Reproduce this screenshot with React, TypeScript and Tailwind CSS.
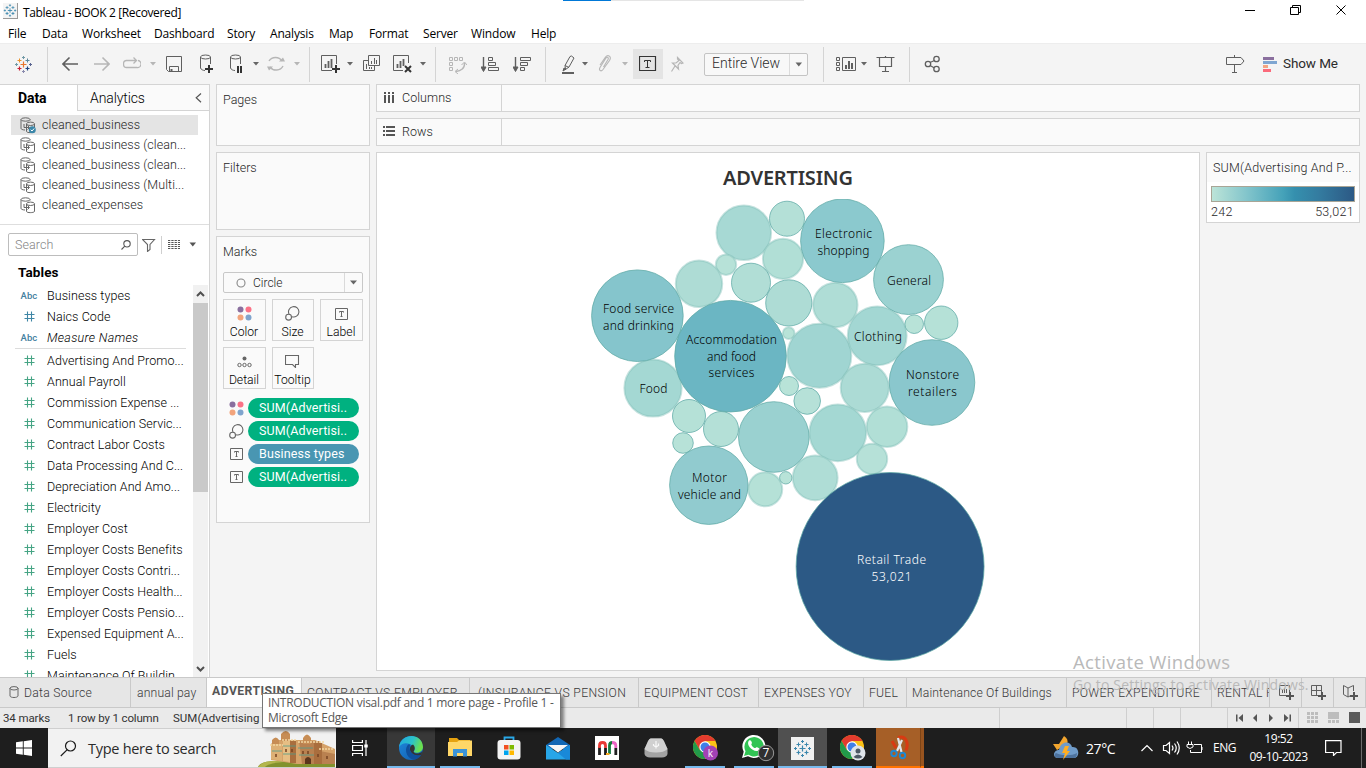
import React from "react";

const UI = "font-['Roboto','Noto_Sans',sans-serif]";
const SEG = "font-['Open_Sans','Noto_Sans',sans-serif]";

/* An icon drawn on the window's own pixel grid: v is "x y width height". */
function Ico({ v, c = "#5f5f5f", className = "", children }: { v: string; c?: string; className?: string; children: React.ReactNode }) {
  const [, , w, h] = v.split(" ");
  return (
    <svg width={w} height={h} viewBox={v} fill="none" stroke={c} strokeWidth="1" className={`block shrink-0 ${className}`}>
      {children}
    </svg>
  );
}

function Caret({ c = "#666666", className = "" }: { c?: string; className?: string }) {
  return (
    <svg width="6" height="4" viewBox="0 0 6 4" className={`block shrink-0 ${className}`}>
      <path d="M0 0H6L3 3.5Z" fill={c} />
    </svg>
  );
}

function Plus({ x, y, r, c, w = 1 }: { x: number; y: number; r: number; c: string; w?: number }) {
  return <path d={`M${x - r} ${y}H${x + r}M${x} ${y - r}V${y + r}`} stroke={c} strokeWidth={w} />;
}

function TableauMark({ mono = false }: { mono?: boolean }) {
  const k = (c: string) => (mono ? "#3b87ad" : c);
  return (
    <>
      <Plus x={8.5} y={8.5} r={3} c={k("#e8762d")} w={1.2} />
      <Plus x={4.5} y={4.5} r={2} c={k("#eb9129")} />
      <Plus x={12.5} y={4.5} r={2} c={k("#5b879b")} />
      <Plus x={4.5} y={12.5} r={2} c={k("#c72035")} w={1.2} />
      <Plus x={12.5} y={12.5} r={2} c={k("#1f447e")} w={1.2} />
      <Plus x={8.5} y={1.5} r={1.5} c={k("#7199a6")} />
      <Plus x={8.5} y={15.5} r={1.5} c={k("#8a8aad")} />
      <Plus x={1.5} y={8.5} r={1.5} c={k("#7199a6")} />
      <Plus x={15.5} y={8.5} r={1.5} c={k("#5b6591")} />
    </>
  );
}

function Sep({ className = "" }: { className?: string }) {
  return <div className={`h-[35px] w-px shrink-0 bg-[#d4d4d4] ${className}`} />;
}

function TitleBar() {
  return (
    <div className="flex h-[23px] shrink-0 items-start bg-white">
      <div className="ml-[3px] mt-[3px] h-4 w-[15px] border-b border-r border-[#9a9a9a] bg-[#f4f4f4]">
        <svg width="14" height="15" viewBox="-1 -1 19 19" fill="none">
          <TableauMark mono />
        </svg>
      </div>
      <div className={`${SEG} ml-[5px] mt-[3px] w-[540px] text-[12px] leading-[19px] tracking-[-0.36px] text-black`}>Tableau - BOOK 2 [Recovered]</div>
      <div className="h-px w-12 bg-[#0078d7]" />
      <div className="h-px w-[193px] bg-[#e5e5e5]" />
      <Ico v="1240 0 120 20" c="#000" className="ml-auto mr-[6px]">
        <path d="M1245 10.5H1255M1290.5 7.5H1298.5V14.500H1290.5ZM1292.500 7.500V5.500H1300.500V12.500H1298.500M1336.500 5.500L1345.500 14.500M1345.500 5.500L1336.500 14.500" />
      </Ico>
    </div>
  );
}

function MenuBar() {
  const items: [string, string][] = [
    ["File", "w-[34px]"], ["Data", "w-10"], ["Worksheet", "w-[72px]"], ["Dashboard", "w-[73px]"], ["Story", "w-[43px]"],
    ["Analysis", "w-[59px]"], ["Map", "w-10"], ["Format", "w-[54px]"], ["Server", "w-12"], ["Window", "w-[60px]"], ["Help", "w-10"],
  ];
  return (
    <div className={`${SEG} flex h-5 shrink-0 items-center bg-white pl-2 pt-[2px] text-[12px] leading-[18px] tracking-[-0.17px] text-black`}>
      {items.map(([t, w]) => (
        <div key={t} className={w}>{t}</div>
      ))}
    </div>
  );
}

function Toolbar() {
  const off = "#b6b6b6";
  return (
    <div className="flex h-[41px] shrink-0 items-center border-t border-[#ededed] bg-[#f4f4f4]">
      <Ico v="0 0 17 17" className="ml-[15px]"><TableauMark /></Ico>
      <Sep className="ml-[15px]" />
      <Ico v="62 55 16 18" className="ml-[14px]"><path d="M69.500 57.500L63 64L69.500 70.500M63 64H78" strokeWidth="1.600" /></Ico>
      <Ico v="94 55 16 18" c={off} className="ml-4"><path d="M102.500 57.500L109 64L102.500 70.500M109 64H94" strokeWidth="1.600" /></Ico>
      <Ico v="123 55 18 18" c={off} className="ml-[13px]"><path d="M137 67.500H126.500A3 3.500 0 0 1 126.500 60.500H136M133.500 57.500L136.500 60.500L133.500 63.500M138 60.500A3.500 3.500 0 0 1 137 67.500" strokeWidth="1.300" /></Ico>
      <Caret c={off} className="ml-[9px]" />
      <Ico v="166 55 17 18" className="ml-[10px]">
        <path d="M166.500 56.500H181.500V71.500H168.500L166.500 69.500ZM169.500 71V66.500H178.500V71" />
        <path d="M171.500 69V72" strokeWidth="2" />
      </Ico>
      <Ico v="198 54 16 22" className="ml-[15px]">
        <path d="M200.500 58V69C201 70.500 203 71.500 205 71.500M210.500 58V65" />
        <ellipse cx="205.500" cy="58" rx="5" ry="2" />
        <Plus x={209} y={70} r={4} c="#333" w={2} />
      </Ico>
      <Ico v="230 54 14 22" className="ml-4">
        <path d="M230.500 58V69C231 70.500 233 71.500 235 71.500M240.500 58V65" />
        <ellipse cx="235.500" cy="58" rx="5" ry="2" />
        <path d="M238 67V74M241 67V74" stroke="#333" strokeWidth="2" />
      </Ico>
      <Caret className="ml-[9px]" />
      <Ico v="267 55 18 18" c={off} className="ml-2">
        <path d="M269 61A7.500 7 0 0 1 282 61M283 66A7.500 7 0 0 1 270 67" strokeWidth="1.400" />
        <path d="M279 61.500H285L283 57.500ZM267 66.500H273L269 70.500Z" fill={off} stroke="none" />
      </Ico>
      <Caret c={off} className="ml-[9px]" />
      <Sep className="ml-[9px]" />
      <Ico v="321 55 20 20" className="ml-[11px]">
        <path d="M332 71.500H321.500V56.500H336.500V65" />
        <path d="M325.500 65V69M328.500 62V69M331.500 60V69" strokeWidth="1.800" />
        <Plus x={336} y={70} r={4} c="#333" w={2} />
      </Ico>
      <Caret className="ml-[6px]" />
      <Ico v="363 54 18 20" className="ml-[10px]">
        <path d="M368 60.500H363.500V70.500H374.500V66M368.500 55.500H379.500V65.500H368.500Z" />
        <path d="M366.500 64V69M369.500 67V69M371.500 67V69M371.500 61V64M374.500 58V64M376.500 60V64" />
      </Ico>
      <Ico v="393 55 19 20" className="ml-3">
        <path d="M403 71.500H393.500V56.500H408.500V64" />
        <path d="M397.500 65V69M400.500 62V69M403.500 60V67" strokeWidth="1.800" />
        <path d="M405 67L411 73M411 67L405 73" stroke="#333" strokeWidth="2" />
      </Ico>
      <Caret className="ml-2" />
      <Sep className="ml-[9px]" />
      <Ico v="449 55 18 19" c={off} className="ml-[13px]">
        <path d="M449.500 57.500H452.500V60.500H449.500ZM454.500 57.500H457.500V60.500H454.500ZM459.500 57.500H462.500V60.500H459.500ZM449.500 62.500H452.500V65.500H449.500ZM449.500 67.500H452.500V70.500H449.500Z" />
        <path d="M464.500 63C465 68 461 71 456 71.500" strokeWidth="1.400" />
        <path d="M461.500 65L464.500 62L467 65M458 69L455 71.500L458 74" />
      </Ico>
      <Ico v="481 55 18 18" className="ml-[14px]">
        <path d="M483.500 57V70" strokeWidth="1.400" />
        <path d="M481 67H486L483.500 71.500Z" fill="#5f5f5f" />
        <path d="M488.500 57.500H492.500V60.500H488.500ZM488.500 62.500H495.500V65.500H488.500ZM488.500 67.500H498.500V70.500H488.500Z" />
      </Ico>
      <Ico v="513 55 18 18" className="ml-[14px]">
        <path d="M515.500 57V70" strokeWidth="1.400" />
        <path d="M513 67H518L515.500 71.500Z" fill="#5f5f5f" />
        <path d="M520.500 57.500H530.500V60.500H520.500ZM520.500 62.500H527.500V65.500H520.500ZM520.500 67.500H524.500V70.500H520.500Z" />
      </Ico>
      <Sep className="ml-[14px]" />
      <Ico v="561 54 14 20" className="ml-[15px]">
        <path d="M571.500 56L574 58L569 67L565.500 69.500L565 65.500L570 56.500ZM565 65.500L569 67.500" />
        <path d="M562 73H574" strokeWidth="2" />
        <path d="M564 68L563 71L566 69Z" fill="#5f5f5f" />
      </Ico>
      <Caret className="ml-[7px]" />
      <Ico v="598 54 14 20" c={off} className="ml-[10px]">
        <path d="M603.500 67L608 59.500C609 57.500 607 56.500 606 58L600 67.500C598.500 70.500 601 72 603 69.500L609.500 60.500C612 56.500 608 54 605.500 57L600 65" strokeWidth="1.100" />
      </Ico>
      <Caret c={off} className="ml-[10px]" />
      <div className="ml-[5px] flex h-[30px] w-[30px] items-center justify-center bg-[#e4e4e4]">
        <Ico v="639 56 18 16" c="#333">
          <path d="M639.500 56.500H655.500V70.500H639.500Z" strokeWidth="1.200" />
          <path d="M644.500 62V60.500H650.500V62M647.500 60.500V67.500M645.500 67.500H649.500" />
        </Ico>
      </div>
      <Ico v="671 55 13 17" c={off} className="ml-[8px]">
        <path d="M677.500 56.500L683 62L681.500 62.500L680 61.500L678 64.500L678.500 68L672.500 62L676 62L679 59.500L677.500 58ZM675 65L671.500 70.500" strokeWidth="1.200" />
      </Ico>
      <div className={`${UI} ml-[20px] flex h-[23px] w-[104px] items-center rounded-[2px] border border-[#c4c4c4] bg-[#f8f8f8] text-[14px] font-light text-[#2b2b2b]`}>
        <span className="ml-[7px] w-[77px] whitespace-nowrap pb-px">Entire View</span>
        <span className="h-full w-px bg-[#dcdcdc]" />
        <svg width="8" height="5" viewBox="0 0 8 5" className="ml-[5px]"><path d="M0.500 0.500H7L3.750 4.500Z" fill="#666" /></svg>
      </div>
      <Sep className="ml-[15px]" />
      <Ico v="836 56 20 16" className="ml-3">
        <path d="M836.500 57.500H839.500V60.500H836.500ZM836.500 62.500H839.500V65.500H836.500ZM836.500 67.500H839.500V70.500H836.500ZM842.500 57.500H855.500V70.500H842.500Z" />
        <path d="M846 65V69M849 61V69M852 63V69" strokeWidth="2" />
      </Ico>
      <Caret className="ml-[5px]" />
      <Ico v="876 55 19 18" className="ml-[9px]"><path d="M876.500 57.500H894.500M879.500 57.500V66.500H891.500V57.500M885.500 56V57M885.500 66.500V71M882 71.500H889" strokeWidth="1.200" /></Ico>
      <Sep className="ml-[14px]" />
      <Ico v="924 55 16 18" className="ml-[14px]">
        <circle cx="928" cy="64" r="2.700" strokeWidth="1.300" /><circle cx="936.500" cy="59" r="2.700" strokeWidth="1.300" /><circle cx="936.500" cy="69" r="2.700" strokeWidth="1.300" />
        <path d="M930 62.500L934.500 60.500M930 65.500L934.500 68" strokeWidth="1.200" />
      </Ico>
      <Ico v="1225 54 20 20" className="ml-auto">
        <path d="M1226.500 57.500H1241L1244 61L1241 64.500H1226.500ZM1234.500 55V57M1234.500 65V72M1232 72.500H1237" />
      </Ico>
      <Ico v="1263 56 14 15" className="ml-[18px]">
        <path d="M1263 57.500H1274" stroke="#8a6f9e" strokeWidth="3" />
        <path d="M1263 61.500H1277" stroke="#7fa6d1" strokeWidth="3" />
        <path d="M1263 65.500H1268" stroke="#f4a582" strokeWidth="3" />
        <path d="M1263 69.500H1271" stroke="#fb6a7b" strokeWidth="3" />
      </Ico>
      <div className={`${UI} ml-[6px] w-[83px] pb-px text-[13.500px] tracking-[-0.1px] text-[#2b2b2b]`}>Show Me</div>
    </div>
  );
}

function DbIcon({ primary = false }: { primary?: boolean }) {
  return (
    <svg width="16" height="17" viewBox="0 0 16 17" fill="none" stroke="#666" className="block shrink-0">
      <path d="M5 13C2.500 13 1 12 1 11.500V2.500M10 2.500V3.500" />
      <ellipse cx="5.500" cy="2.500" rx="4.500" ry="1.700" />
      <path d="M6.500 7V14.500C7 16 13.500 16 14.500 14.500V7" />
      <ellipse cx="10.500" cy="6.800" rx="4" ry="1.700" />
      <path d="M4 7V10.500H9M7.500 8.500L9.500 10.500L7.500 12.500" />
      {primary && (
        <>
          <circle cx="12.300" cy="12.700" r="3.500" fill="#3b87a9" stroke="none" />
          <path d="M10.700 12.700L12 14L14.200 11.500" stroke="#fff" />
        </>
      )}
    </svg>
  );
}

function FieldRow({ kind, name }: { kind: "abc" | "dim" | "num"; name: string }) {
  return (
    <div className="flex h-[21px] shrink-0 items-center">
      <div className="flex w-[47px] shrink-0 justify-center pl-[11px]">
        {kind === "abc" ? (
          <span className={`${UI} pt-px text-[9.500px] font-medium leading-3 text-[#45819f]`}>Abc</span>
        ) : (
          <svg width="11" height="11" viewBox="0 0 11 11" fill="none" stroke={kind === "dim" ? "#3f86a5" : "#45a484"} strokeWidth="1.100">
            <path d="M0.500 3.500H10.500M0.500 7.500H10.500M3.500 0.500V10.500M7.500 0.500V10.500" />
          </svg>
        )}
      </div>
      <div className={`whitespace-nowrap pt-px ${name === "Measure Names" ? "italic tracking-[0.3px]" : ""}`}>{name}</div>
    </div>
  );
}

function DataPane() {
  const sources = ["cleaned_business", "cleaned_business (clean...", "cleaned_business (clean...", "cleaned_business (Multi...", "cleaned_expenses"];
  const measures = [
    "Advertising And Promo...", "Annual Payroll", "Commission Expense ...", "Communication Servic...", "Contract Labor Costs",
    "Data Processing And C...", "Depreciation And Amo...", "Electricity", "Employer Cost", "Employer Costs Benefits", "Employer Costs Contri...",
    "Employer Costs Health...", "Employer Costs Pensio...", "Expensed Equipment A...", "Fuels", "Maintenance Of Buildin...",
  ];
  return (
    <div className={`${UI} flex w-[210px] shrink-0 flex-col overflow-hidden border-r border-t border-[#d4d4d4] bg-white text-[12.5px] font-light tracking-[0.07px] text-black`}>
      <div className="flex h-[26px] shrink-0 text-[14px] leading-[26px]">
        <div className="w-[77px] pl-[18px] font-bold tracking-[-0.1px] text-black">Data</div>
        <div className="flex flex-1 items-center border-b border-l border-[#d4d4d4] bg-[#fafafa] pl-3">
          <span className="flex-1 tracking-[-0.1px]">Analytics</span>
          <svg width="7" height="10" viewBox="0 0 7 10" fill="none" stroke="#555" strokeWidth="1.200" className="mr-[7px]"><path d="M6 0.500L1.200 4.800L6 9.200" /></svg>
        </div>
      </div>
      <div className="mt-1 flex h-[110px] shrink-0 flex-col border-b border-[#dedede] pl-[11px] pr-[11px] text-[#262626]">
        {sources.map((s, i) => (
          <div key={i} className={`flex h-5 shrink-0 items-center pl-[9px] ${i === 0 ? "bg-[#e4e4e4]" : ""}`}>
            <DbIcon primary={i === 0} />
            <span className="ml-[6px] whitespace-nowrap">{s}</span>
          </div>
        ))}
      </div>
      <div className="mt-2 flex h-[23px] shrink-0 items-center pl-2">
        <div className="flex h-[23px] w-[130px] items-center rounded-[2px] border border-[#bdbdbd] pl-[6px] text-[#858585]">
          <span className="flex-1 pt-px">Search</span>
          <svg width="10" height="10" viewBox="0 0 10 10" fill="none" stroke="#555" strokeWidth="1.100" className="mr-[6px]"><circle cx="6" cy="3.800" r="3.200" /><path d="M3.800 6.200L0.500 9.500" /></svg>
        </div>
        <Ico v="142 237 14 14" className="ml-1" c="#666"><path d="M142.500 238.500H154.500L150 243.500V248.500L147.500 250.500V243.500Z" strokeWidth="1.100" /></Ico>
        <div className="ml-[5px] h-[18px] w-px bg-[#cfcfcf]" />
        <svg width="12" height="9" viewBox="0 0 12 9" stroke="#555" strokeDasharray="2.300 1" className="ml-[6px] mb-px"><path d="M0 0.500H12M0 2.500H12M0 4.500H12M0 6.500H12M0 8.500H12" /></svg>
        <svg width="8" height="5" viewBox="0 0 8 5" className="ml-[9px]"><path d="M0.500 0.500H7L3.750 4.500Z" fill="#555" /></svg>
      </div>
      <div className="h-[29px] shrink-0 pl-[18px] text-[13.5px] font-bold leading-[32px] tracking-[0.1px] text-black">Tables</div>
      <div className="flex min-h-0 flex-1">
        <div className="flex w-[193px] flex-col overflow-hidden">
          <FieldRow kind="abc" name="Business types" />
          <FieldRow kind="dim" name="Naics Code" />
          <FieldRow kind="abc" name="Measure Names" />
          <div className="ml-[15px] mr-[7px] h-px shrink-0 bg-[#dcdcdc]" />
          <div className="h-px shrink-0" />
          {measures.map((m) => (
            <FieldRow key={m} kind="num" name={m} />
          ))}
        </div>
        <div className="flex w-[15px] flex-col items-center bg-[#f1f1f1]">
          <svg width="9" height="6" viewBox="0 0 9 6" fill="none" stroke="#505050" strokeWidth="2" className="mb-[6px] mt-[6px] shrink-0"><path d="M1 5L4.500 1.500L8 5" /></svg>
          <div className="h-[189px] w-full shrink-0 bg-[#c9c9c9]" />
          <svg width="9" height="6" viewBox="0 0 9 6" fill="none" stroke="#505050" strokeWidth="2" className="mb-[5px] mt-auto shrink-0"><path d="M1 1L4.500 4.500L8 1" /></svg>
        </div>
      </div>
    </div>
  );
}

const Dots = () => (
  <svg width="15" height="15" viewBox="0 0 15 15"><circle cx="3.500" cy="3.500" r="3" fill="#8a6f9e" /><circle cx="11.500" cy="3.500" r="3" fill="#fb7287" /><circle cx="3.500" cy="11.500" r="3" fill="#f2a47c" /><circle cx="11.500" cy="11.500" r="3" fill="#7fa4cd" /></svg>
);
const SizeIcon = () => (
  <svg width="15" height="15" viewBox="0 0 15 15" fill="none" stroke="#666" strokeWidth="1.100"><path d="M4 8A5.200 5.200 0 1 1 7 10.700" /><circle cx="3.600" cy="11.200" r="2.900" /></svg>
);
const TIcon = () => (
  <svg width="13" height="12" viewBox="0 0 13 12" fill="none" stroke="#666"><path d="M0.500 0.500H12.500V11.500H0.500ZM4.500 4.500V3.500H8.500V4.500M6.500 3.500V8.500M5.500 8.500H7.500" /></svg>
);
const DetailIcon = () => (
  <svg width="15" height="12" viewBox="0 0 15 12" fill="none" stroke="#666"><circle cx="7.500" cy="2.500" r="2" fill="#666" stroke="none" /><circle cx="2.500" cy="9" r="1.700" /><circle cx="7.500" cy="9" r="1.700" /><circle cx="12.500" cy="9" r="1.700" /></svg>
);
const TipIcon = () => (
  <svg width="15" height="13" viewBox="0 0 15 13" fill="none" stroke="#666" strokeWidth="1.100"><path d="M0.500 0.500H13.500V9.500H10.500V12.500L7.500 9.500H0.500Z" /></svg>
);

function Cards() {
  const pills: [React.ReactNode, string, string][] = [
    [<Dots />, "SUM(Advertisi..", "bg-[#00b180]"],
    [<SizeIcon />, "SUM(Advertisi..", "bg-[#00b180]"],
    [<TIcon />, "Business types", "bg-[#4996b2]"],
    [<TIcon />, "SUM(Advertisi..", "bg-[#00b180]"],
  ];
  const buttons: [React.ReactNode, string, string][] = [
    [<Dots />, "Color", "w-[43px]"], [<SizeIcon />, "Size", "w-[42px]"], [<TIcon />, "Label", "w-[43px]"],
    [<DetailIcon />, "Detail", "w-[43px]"], [<TipIcon />, "Tooltip", "w-[42px]"],
  ];
  const card = "border border-[#d4d4d4] bg-[#fafafa] pl-[6px]";
  return (
    <div className={`${UI} ml-[6px] flex w-[154px] shrink-0 flex-col gap-[6px] text-[12.5px] font-light text-[#262626]`}>
      <div className={`${card} h-[62px] leading-[30px]`}>Pages</div>
      <div className={`${card} h-[78px] leading-[30px]`}>Filters</div>
      <div className={`${card} h-[287px]`}>
        <div className="h-[35px] leading-[30px]">Marks</div>
        <div className="flex h-[21px] w-[140px] items-center rounded-[2px] border border-[#c8c8c8] text-[12px]">
          <svg width="10" height="10" viewBox="0 0 10 10" className="ml-3"><circle cx="5" cy="5" r="4" fill="none" stroke="#888" strokeWidth="1.100" /></svg>
          <span className="ml-[7px] flex-1 pt-px">Circle</span>
          <span className="h-full w-px bg-[#dadada]" />
          <svg width="7" height="5" viewBox="0 0 7 5" className="ml-[5px] mr-[5px]"><path d="M0 0.500H7L3.500 4.500Z" fill="#666" /></svg>
        </div>
        <div className="mt-[6px] flex flex-wrap gap-x-[6px] gap-y-[6px]">
          {buttons.map(([ic, t, w]) => (
            <div key={t} className={`${w} flex h-[42px] flex-col items-center whitespace-nowrap border border-[#d4d4d4] pr-px text-[12.2px] leading-[15px] text-black`}>
              <div className="flex h-[25px] items-center pt-[2px]">{ic}</div>
              {t}
            </div>
          ))}
        </div>
        <div className="mt-[9px] flex flex-col gap-[3px]">
          {pills.map(([ic, t, bg], i) => (
            <div key={i} className="flex h-5 items-center">
              <div className="flex w-[28px] justify-center pr-[2px]"><div className="flex w-[15px] shrink-0 justify-center">{ic}</div></div>
              <div className={`${bg} -ml-[3px] h-5 w-[111px] rounded-full pl-[11px] text-[12.5px] font-normal leading-5 tracking-[0.12px] text-white`}>{t}</div>
            </div>
          ))}
        </div>
      </div>
    </div>
  );
}

const bubbles: [number, number, number, string][] = [
  [743.8, 232.8, 27.7, "#a7d9d4"], [787, 218.7, 18, "#b4e0d7"], [783, 258.8, 20.5, "#b1dfd6"], [726, 264.7, 10.6, "#b7e2d8"],
  [751, 282.7, 20, "#b1ded6"], [699, 283.8, 23.6, "#aedcd5"], [788.8, 302.9, 23.6, "#aedcd5"], [835.3, 305, 22.6, "#afddd6"],
  [788.7, 333.2, 6.3, "#b8e3d8"], [819.3, 355.8, 32.4, "#a0d5d2"], [877.2, 335.8, 29.8, "#a3d7d3"], [914.2, 324.2, 9.8, "#b8e3d8"],
  [941.2, 322.7, 17.2, "#b5e1d7"], [789, 386, 10, "#b8e3d8"], [807.2, 401, 13.8, "#b6e1d8"], [864.8, 387.8, 24.5, "#acdbd5"],
  [653, 388, 29, "#a4d8d3"], [689, 416, 17, "#b5e1d7"], [721, 429, 18, "#b4e0d7"], [837.8, 432.8, 28.8, "#a4d8d3"],
  [887, 426.7, 20.7, "#b1dfd6"], [683, 443, 10.8, "#b7e2d8"], [765.2, 489.3, 17.4, "#b5e1d7"], [785.8, 477.8, 6.7, "#b8e3d8"],
  [815.2, 477.8, 22.8, "#afddd6"], [872, 458.9, 15.6, "#b6e1d8"], [773.8, 437, 35.8, "#9ad1d0"], [708.8, 485.2, 39.7, "#91cbcf"],
  [637.4, 315.7, 46.3, "#85c5cc"], [842.4, 240.8, 42.3, "#8bc9ce"], [908.5, 279.6, 35.4, "#9bd2d1"], [932, 382.5, 43.3, "#8ac7cd"],
  [730.5, 356.2, 56.3, "#6bb6c3"], [890.1, 566.5, 94.5, "#2c5985"],
];

const softRing = new Set([0, 2, 3, 5, 7, 8, 9, 10, 15, 16, 19, 20, 22, 24, 25]);

const labels: [string, number, number, number][] = [
  ["Electronic", 843.5, 238, 57], ["shopping", 843.5, 255, 52], ["General", 909, 285, 44], ["Clothing", 878, 341, 48],
  ["Food service", 638.5, 313, 71], ["and drinking", 638.5, 330, 71], ["Accommodation", 731.5, 344, 91], ["and food", 731.5, 361, 49],
  ["services", 731.5, 377, 46], ["Food", 653.5, 393, 28], ["Nonstore", 932.5, 379, 53], ["retailers", 932.5, 396, 49],
  ["Motor", 709.5, 482, 35], ["vehicle and", 709.5, 499, 63], ["Retail Trade", 891.5, 564, 69], ["53,021", 891.5, 581, 40],
];

function Viz() {
  return (
    <svg width="822" height="517" viewBox="377 153 822 517" className="block font-['Noto_Sans',sans-serif]">
      <clipPath id="plot"><rect x="377" y="199" width="822" height="470" /></clipPath>
      <text x="788" y="185" textAnchor="middle" textLength="130" className="fill-[#333] text-[20px] font-semibold">ADVERTISING</text>
      <g clipPath="url(#plot)">
        {bubbles.map(([x, y, r, c], i) =>
          softRing.has(i) ? (
            <circle key={i} cx={x} cy={y} r={r - 0.4} fill={c} stroke="#86c0bb" strokeOpacity="0.45" strokeWidth="2" />
          ) : (
            <circle key={i} cx={x} cy={y} r={r - 0.5} fill={c} stroke="#5fa9a5" strokeOpacity="0.75" />
          ),
        )}
      </g>
      {labels.map(([t, x, y, w]) => (
        <text key={t} x={x} y={y} textAnchor="middle" textLength={w} className={y > 540 ? "fill-white text-[12px] font-light" : "fill-black text-[12px] font-light"}>{t}</text>
      ))}
    </svg>
  );
}

function Shelf({ name }: { name: string }) {
  return (
    <div className="flex h-7 shrink-0 items-center border border-[#d4d4d4] bg-[#fafafa] text-[12.5px] font-light text-[#262626]">
      <div className="flex h-full w-[125px] items-center border-r border-[#d4d4d4] pl-[6px]">
        {name === "Columns" ? (
          <svg width="12" height="11" viewBox="0 0 12 11" className="mt-[-2px]"><path d="M2 0V2M6 0V2M10 0V2M2 3V11M6 3V11M10 3V11" stroke="#555" strokeWidth="2" /></svg>
        ) : (
          <svg width="12" height="11" viewBox="0 0 12 11" className="mt-[-2px]"><path d="M0 1H2M0 5H2M0 9H2M3 1H12M3 5H12M3 9H12" stroke="#555" strokeWidth="2" /></svg>
        )}
        <span className="ml-[7px] pt-px tracking-[0.05px]">{name}</span>
      </div>
    </div>
  );
}

function Workspace() {
  return (
    <div className={`${UI} ml-[6px] flex w-[984px] shrink-0 flex-col gap-[6px]`}>
      <Shelf name="Columns" />
      <Shelf name="Rows" />
      <div className="flex gap-[6px]">
        <div className="h-[519px] w-[824px] border border-[#d4d4d4] bg-white"><Viz /></div>
        <div className="flex h-[71px] w-[154px] flex-col border border-[#d4d4d4] bg-white text-[12.5px] font-light text-[#262626]">
          <div className="h-[29px] whitespace-nowrap bg-[#fafafa] pl-[6px] leading-[30px] tracking-[0.18px]">SUM(Advertising And P...</div>
          <div className="ml-1 mt-1 h-4 w-36 shrink-0 border border-[#a9a596] bg-[linear-gradient(90deg,#bce4d8_0%,#81c4cb_25%,#45a2b9_50%,#3590ae_58%,#347ca0_75%,#2c5985_100%)]" />
          <div className="flex justify-between pl-1 pr-[5px] leading-[20px] tracking-[0.3px]"><span>242</span><span>53,021</span></div>
        </div>
      </div>
    </div>
  );
}

function SheetTabs() {
  const tabs: [string, string][] = [
    ["CONTRACT VS EMPLOYER", "w-[168px] pl-[5px] tracking-[0.36px]"], ["(INSURANCE VS PENSION", "w-[169px] pl-[8px] tracking-[0.34px]"],
    ["EQUIPMENT COST", "w-[120px] pl-[5px] tracking-[0.25px]"], ["EXPENSES YOY", "w-[105px] pl-[5px] tracking-[0.3px]"],
    ["FUEL", "w-[43px] pl-[5px] tracking-[0.2px]"], ["Maintenance Of Buildings", "w-[160px] pl-[5px] tracking-[0.15px]"],
    ["POWER EXPENDITURE", "w-[145px] pl-[5px] tracking-[0.3px]"], ["RENTAL PAYMENT", "w-[58px] pl-[5px] tracking-[0.3px]"],
  ];
  const cell = "h-full shrink-0 overflow-hidden whitespace-nowrap border-r border-[#c9c9c9]";
  return (
    <div className={`${UI} flex h-[31px] shrink-0 border-b border-t border-[#c9c9c9] bg-[#e6e6e6] text-[12.2px] font-light leading-[30px] text-[#383838]`}>
      <div className={`${cell} flex w-[131px] items-start pl-[9px] tracking-[0.25px]`}>
        <svg width="10" height="12" viewBox="0 0 10 12" fill="none" stroke="#666" className="mr-[5px] mt-2"><path d="M1 2V10C1.500 12 8.500 12 9 10V2" /><ellipse cx="5" cy="2.300" rx="4" ry="1.700" /></svg>
        Data Source
      </div>
      <div className={`${cell} w-[76px] pl-[6px] tracking-[0.15px]`}>annual pay</div>
      <div className={`${cell} w-[95px] bg-[#fdfdfd] pl-[5px] font-bold leading-[27px] tracking-[0.45px] text-[#555]`}>ADVERTISING</div>
      {tabs.map(([t, w]) => (
        <div key={t} className={`${cell} ${w}`}>{t}</div>
      ))}
      <div className={`${cell} flex w-8 items-center justify-center`}>
        <Ico v="1278 685 16 17"><path d="M1288 696.500H1279.500V686.500H1289.500V693M1282.500 691V694M1284.500 689V694M1286.500 690V694" /><Plus x={1290} y={697} r={4} c="#555" w={2} /></Ico>
      </div>
      <div className={`${cell} flex w-8 items-center justify-center`}>
        <Ico v="1310 685 16 17"><path d="M1320 696.500H1311.500V686.500H1321.500V693M1316.500 687V696M1312 691.500H1321" /><Plus x={1322} y={697} r={4} c="#555" w={2} /></Ico>
      </div>
      <div className={`${cell} flex w-8 items-center justify-center`}>
        <Ico v="1342 685 16 17"><path d="M1348 689L1343.500 686.500V695.500L1348 698V689L1353.500 686.500V692M1348 698L1350 697" /><Plus x={1354} y={697} r={4} c="#555" w={2} /></Ico>
      </div>
    </div>
  );
}

function StatusBar() {
  const cell = "h-full shrink-0 border-r border-[#cfcfcf]";
  return (
    <div className={`${UI} flex h-5 shrink-0 bg-[#eaeaea] text-[11.5px] leading-5 text-[#333]`}>
      <div className="w-[64px] pl-[3px] tracking-[-0.1px]">34 marks</div>
      <div className="w-[109px] pl-[4px] tracking-[-0.15px]">1 row by 1 column</div>
      <div className={`${cell} w-[827px] tracking-[0.02px]`}>SUM(Advertising</div>
      <div className={`${cell} w-[127px]`} />
      <div className={`${cell} w-[27px]`} />
      <div className={`${cell} w-[27px]`} />
      <div className={`${cell} w-[47px]`} />
      <div className={`${cell} flex w-[71px] items-center justify-center pl-[2px]`}>
        <svg width="56" height="8" viewBox="0 0 56 8" fill="#555"><path d="M0 0.500H1.500V7.500H0ZM7 0V8L2.500 4ZM21 0V8L17 4ZM33 0V8L37 4ZM48 0V8L52.500 4ZM53.500 0.500H55V7.500H53.500Z" /></svg>
      </div>
      <svg width="67" height="20" viewBox="1299 708 67 20" className="block">
        <path d="M1307 713.500H1318M1307 717.500H1318M1307 721.500H1318" stroke="#bdbdbd" strokeWidth="3" strokeDasharray="3 1" />
        <path d="M1328 712H1339V719H1328Z" fill="#bdbdbd" />
        <path d="M1328 721.500H1339" stroke="#bdbdbd" strokeWidth="3" strokeDasharray="3 1" />
        <path d="M1349 712H1360V723H1349Z" fill="#5a5a5a" />
      </svg>
    </div>
  );
}

function Fort() {
  return (
    <svg width="77" height="36" viewBox="259 732 77 36" className="block self-end">
      <path d="M259 768C261 762 275 760 296 764C315 767 328 760 336 763V768Z" fill="#82922d" />
      <path d="M272 745L276 741H316L336 750V765H298L272 761Z" fill="#d5a269" />
      <path d="M300 742H321V752L336 755V765H303Z" fill="#b98150" />
      <path d="M282 735Q287 729 291 735V742H282ZM304 739Q308 732 312 739V745H304ZM273 741Q277 736 280 741V746H273Z" fill="#c78d55" />
      <path d="M284 742H297V764L284 762Z" fill="#e6be83" />
      <path d="M291 742H297V764H291ZM315 744H323V765H315Z" fill="#a96e3e" />
      <path d="M272 745H283V762L272 760Z" fill="#ddb075" />
      <path d="M283 741H298M271 746H284M299 743H325M320 750H335" stroke="#f3d8a3" strokeWidth="1.500" strokeDasharray="2 1" />
      <path d="M284 747H297M273 752H283M299 749H314M284 755H297M300 756H315" stroke="#4f9c8e" strokeWidth="0.800" />
      <path d="M287 750V753M293 750V753M277 755V758M304 752V755M309 752V755M319 755V758M328 757V760" stroke="#754322" strokeWidth="1.500" />
      <path d="M306 765V760Q309 756 312 760V765Z" fill="#5c351c" />
      <path d="M259 768C263 762 274 761 284 763C272 764 268 766 266 768Z" fill="#b3b64c" />
    </svg>
  );
}

const Chrome = ({ children }: { children: React.ReactNode }) => (
  <svg width="26" height="26" viewBox="0 0 26 26" className="-mr-0.5">
    <circle cx="12" cy="12" r="12" fill="#fbc116" />
    <path d="M1.600 6A12 12 0 0 1 22.400 6H12L6.800 15Z" fill="#e33b2e" />
    <path d="M1.600 6A12 12 0 0 0 12 24L17.200 15L12 12L6.800 15Z" fill="#229a4a" />
    <circle cx="12" cy="12" r="5.700" fill="#fff" /><circle cx="12" cy="12" r="4.500" fill="#3f7fe8" />
    {children}
  </svg>
);

function TaskButton({ w, bar = "", bg = "", children }: { w: string; bar?: string; bg?: string; children: React.ReactNode }) {
  return (
    <div className={`flex h-full ${w} shrink-0 flex-col items-center ${bg}`}>
      <div className="flex h-[38px] items-center pt-[2px]">{children}</div>
      <div className={`h-[2px] ${bar}`} />
    </div>
  );
}

function Taskbar() {
  return (
    <div className={`${SEG} flex h-10 shrink-0 items-center bg-[#1e1e1e] text-white`}>
      <div className="flex w-12 justify-center">
        <svg width="16" height="16" viewBox="0 0 16 16" fill="#fff"><path d="M0 2.300L6.800 1.300V7.500H0ZM7.700 1.200L16 0V7.500H7.700ZM0 8.400H6.800V14.700L0 13.700ZM7.700 8.400H16V16L7.700 14.800Z" /></svg>
      </div>
      <div className="flex h-full w-[288px] items-center border-b border-t border-[#cfcfcf] bg-[#f2f2f2] pl-3">
        <svg width="17" height="17" viewBox="0 0 17 17" fill="none" stroke="#1a1a1a" strokeWidth="1.200"><circle cx="10.500" cy="6" r="5" /><path d="M7 9.800L0.800 16" /></svg>
        <span className="ml-[11px] w-[170px] whitespace-nowrap pt-px text-[14.500px] tracking-[-0.28px] text-[#2b2b2b]">Type here to search</span>
        <Fort />
      </div>
      <div className="flex w-[51px] pl-4">
        <svg width="17" height="16" viewBox="0 0 17 16" fill="none" stroke="#fff" strokeWidth="1.200"><path d="M0.600 0V2.500H10.400V0M0.600 5.500H10.400V10.500H0.600ZM0.600 16V13.500H10.400V16M14 0V16" /><path d="M14 4.500V7.500" strokeWidth="3.500" /></svg>
      </div>
      <TaskButton w="w-12" bg="bg-[#383838]" bar="w-full bg-[#76b9ed]">
        <svg width="24" height="24" viewBox="0 0 24 24">
          <defs>
            <linearGradient id="ea" x1="0" y1="0" x2="1" y2="0.300"><stop offset="0" stopColor="#21a8e0" /><stop offset="0.600" stopColor="#2cc3c9" /><stop offset="1" stopColor="#6be04e" /></linearGradient>
            <linearGradient id="eb" x1="0" y1="0" x2="1" y2="1"><stop offset="0" stopColor="#1f8ae0" /><stop offset="1" stopColor="#1159a8" /></linearGradient>
          </defs>
          <circle cx="12" cy="12" r="12" fill="url(#eb)" />
          <path d="M0 11C2 -3 23 -4 24 11C24 16 18 18 14.500 16C16 14 16 12 14.500 10.500C10 6 3 6 0 11Z" fill="url(#ea)" />
          <path d="M14 8.500C16 10 16.500 13 14.500 15.500C15 18 20 18.500 23.500 15.500L22 19.500C18 20.500 12 19 11 14C10.600 11 12 9 14 8.500Z" fill="#333" />
          <path d="M10 8C5 11 6 22 15 23.700C19 23 21 21 22.500 18.800C15 21 9 16 11 9Z" fill="#0f4f9c" />
        </svg>
      </TaskButton>
      <TaskButton w="w-[49px]" bar="w-10 bg-[#76b9ed]">
        <svg width="24" height="20" viewBox="0 0 24 20"><path d="M1 0H9L11 2H22V6H1Z" fill="#e6a20f" /><path d="M0 4H9L11 2.500H24V18H0Z" fill="#ffd768" /><path d="M5 11H19V18.500H15V15H9V18.500H5Z" fill="#3b93d8" /></svg>
      </TaskButton>
      <TaskButton w="w-[49px]">
        <svg width="24" height="24" viewBox="0 0 24 24"><path d="M7.500 5V1.500H16.500V5" fill="none" stroke="#29a8e8" strokeWidth="1.800" /><rect x="0.500" y="4" width="23" height="19.500" rx="3" fill="#f4f4f4" /><path d="M7 9H11.500V13.500H7Z" fill="#f25022" /><path d="M12.500 9H17V13.500H12.500Z" fill="#7fba00" /><path d="M7 14.500H11.500V19H7Z" fill="#00a4ef" /><path d="M12.500 14.500H17V19H12.500Z" fill="#ffb900" /></svg>
      </TaskButton>
      <TaskButton w="w-[49px]">
        <svg width="24" height="23" viewBox="0 0 24 23"><path d="M0 8L12 0L24 8V12H0Z" fill="#1267b4" /><path d="M0 8V22.500H24V8L12 16Z" fill="#28a6e8" /><path d="M12 16L24 8V22.500H20Z" fill="#1989d8" /><path d="M2 8H22L12 15.500Z" fill="#f6f6f6" /></svg>
      </TaskButton>
      <TaskButton w="w-[49px]">
        <svg width="24" height="24" viewBox="0 0 24 24" fill="none" strokeWidth="2.800"><path d="M0 0H24V24H0Z" fill="#fff" stroke="none" /><path d="M4.500 19V11" stroke="#202020" /><path d="M4.500 12V9.500C4.500 5.500 10.500 5.500 10.500 9.500V12" stroke="#e83a35" /><path d="M10.500 12V19" stroke="#1b1b1b" /><path d="M14.500 18V9.500C14.500 7.500 15.800 6.500 17.500 6.500" stroke="#167a3d" /><path d="M17 6.500C19.500 6.500 20.800 7.500 20.800 9.500V12" stroke="#ed66c5" /><path d="M20.800 12V19" stroke="#202020" /><path d="M11 18H14.500" stroke="#f4a51c" strokeWidth="2" /></svg>
      </TaskButton>
      <TaskButton w="w-[49px]">
        <svg width="24" height="20" viewBox="0 0 24 20"><path d="M6 0.500H18L23.500 11V16C23 18 21 19.500 18 19.500H6C3 19.500 1 18 0.500 16V11Z" fill="#a3a3a3" /><path d="M7 0.500H17Q19 0.500 20 3L23.500 11Q20 14.500 12 14.500Q4 14.500 0.500 11L4 3Q5 0.500 7 0.500Z" fill="#d0d0d0" /><path d="M12 3V10.500M9.500 6V7.500L12 9L14.500 7.500V5.500" stroke="#f9f9f9" fill="none" strokeWidth="1.200" /></svg>
      </TaskButton>
      <TaskButton w="w-[49px]" bar="w-10 bg-[#76b9ed]">
        <Chrome><circle cx="17.500" cy="18" r="7.500" fill="#a241b5" /><text x="17.500" y="21.500" textAnchor="middle" fontSize="10" fill="#fff">k</text></Chrome>
      </TaskButton>
      <TaskButton w="w-[49px]" bar="w-10 bg-[#76b9ed]">
        <svg width="34" height="28" viewBox="0 0 34 28" className="-mr-2">
          <path d="M1 24L2.700 17.800A11.500 11.500 0 1 1 7 22.300Z" fill="#fff" />
          <path d="M3 22L4.500 17.300A9.700 9.700 0 1 1 7.500 20.700Z" fill="#31c454" />
          <path d="M8 6.500C9.500 5.500 10.500 7 11 9C10 10.500 10 10.500 11.500 12.500C13 14 14 14.500 15 13.500C16 12.500 18.500 14 18.500 15C17 19 11 16.500 8.500 13C6.500 10 6.800 8 8 6.500Z" fill="#fff" />
          <circle cx="25" cy="19" r="7.700" fill="#303030" stroke="#999" /><text x="25" y="23.300" textAnchor="middle" fontSize="12" fill="#fff">7</text>
        </svg>
      </TaskButton>
      <TaskButton w="w-[49px]" bg="bg-[#505050]" bar="w-full bg-[#76b9ed]">
        <svg width="23" height="23" viewBox="-3 -3 23 23" fill="none" className="mr-px"><path d="M-3 -3H20V20H-3Z" fill="#f1f1f1" /><TableauMark mono /></svg>
      </TaskButton>
      <TaskButton w="w-[49px]" bar="w-10 bg-[#76b9ed]">
        <Chrome><circle cx="18" cy="18" r="7.500" fill="#dfe4ea" /><circle cx="18" cy="16" r="2.500" fill="#4c5865" /><path d="M13.500 22Q18 17 22.500 22Q18 25 13.500 22Z" fill="#4c5865" /></Chrome>
      </TaskButton>
      <div className="flex h-full">
        <TaskButton w="w-11" bg="bg-[#a65f27]" bar="w-full bg-[#ff7300]">
          <svg width="22" height="26" viewBox="0 0 22 26" fill="none" className="-mr-1"><path d="M9 2.500C17 0 20 8 17 15.500M3 6L7 13" stroke="#d93a12" strokeWidth="3" /><path d="M9 3L12.500 17M13 5L8 16" stroke="#e1e6ea" strokeWidth="2.200" /><circle cx="5" cy="18.500" r="2.700" stroke="#1e88d2" strokeWidth="2" /><circle cx="13.500" cy="20.500" r="2.700" stroke="#1e88d2" strokeWidth="2" /></svg>
        </TaskButton>
        <div className="h-full w-1 border-b-2 border-l border-b-[#ff7300] border-l-[#7c4417] bg-[#98541f]" />
      </div>
      <svg width="26" height="24" viewBox="0 0 26 24" className="ml-auto"><path d="M11 0Q16 3 14 8L4 14L0 8L6 8Z" fill="#f2a52e" /><path d="M5 22C-1 22 0 14 6 14C8 4 18 5 19 11C27 10 27 22 21 22Z" fill="#6f9bc9" /><path d="M5 22C1 22 1 18 3 17C9 20 19 20 24 17C24 21 22 22 21 22Z" fill="#4d729d" /><path d="M12 10H16L14 15H17L10 24L12 17H9Z" fill="#ffae22" /></svg>
      <span className="ml-[7px] w-[55px] text-[14px] tracking-[-0.4px]">27°C</span>
      <svg width="62" height="16" viewBox="1141 740 62 16" fill="none" stroke="#fff" strokeWidth="1.200">
        <path d="M1141.500 751L1147 745.500L1152.500 751M1163.500 745.500V750.500H1166L1169.500 753.500V742.500L1166 745.500ZM1172 745.500Q1174 748 1172 750.500M1174.500 743.500Q1178 748 1174.500 752.500M1177 741.500Q1181.500 748 1177 754.500" />
        <path d="M1194 744.500H1201.500V752.500H1190.500V750M1203 747V750M1188.500 741.500V744M1191.500 741.500V744M1187 744.500H1193V747Q1190 750 1187 747Z" strokeWidth="1" />
      </svg>
      <span className="ml-[10px] w-[35px] text-[12px] tracking-[-0.5px]">ENG</span>
      <div className="w-[61px] text-center text-[12px] leading-[18px] tracking-[-0.45px]"><div>19:52</div><div>09-10-2023</div></div>
      <svg width="17" height="16" viewBox="0 0 17 16" fill="none" stroke="#fff" strokeWidth="1.200" className="ml-4"><path d="M0.600 0.600H16V12.500H11.500L8.500 15.500V12.500H0.600Z" /></svg>
      <div className="ml-[19px] mr-1 h-full w-px bg-[#6b6b6b]" />
    </div>
  );
}

export default function App() {
  return (
    <div className="relative flex h-[768px] w-[1366px] flex-col overflow-hidden bg-[#f4f4f4]">
      <TitleBar />
      <MenuBar />
      <Toolbar />
      <div className="flex h-[593px] shrink-0">
        <DataPane />
        <Cards />
        <Workspace />
      </div>
      <SheetTabs />
      <StatusBar />
      <Taskbar />
      <div className={`${SEG} absolute left-[262px] top-[693px] h-[35px] w-[299px] whitespace-nowrap border border-[#767676] bg-white pl-[5px] pt-px text-[12px] leading-[15px] tracking-[-0.27px] text-[#575757] shadow-[3px_3px_3px_rgba(0,0,0,0.45)]`}>
        INTRODUCTION visal.pdf and 1 more page - Profile 1 -<br />Microsoft Edge
      </div>
      <div className={`${SEG} absolute left-[1073px] top-[649px] whitespace-nowrap text-[#b9b9b9]`}>
        <div className="text-[18.500px] leading-[26px] tracking-[0.35px]">Activate Windows</div>
        <div className="text-[14px] leading-[20px] tracking-[0.18px]">Go to Settings to activate Windows.</div>
      </div>
    </div>
  );
}
